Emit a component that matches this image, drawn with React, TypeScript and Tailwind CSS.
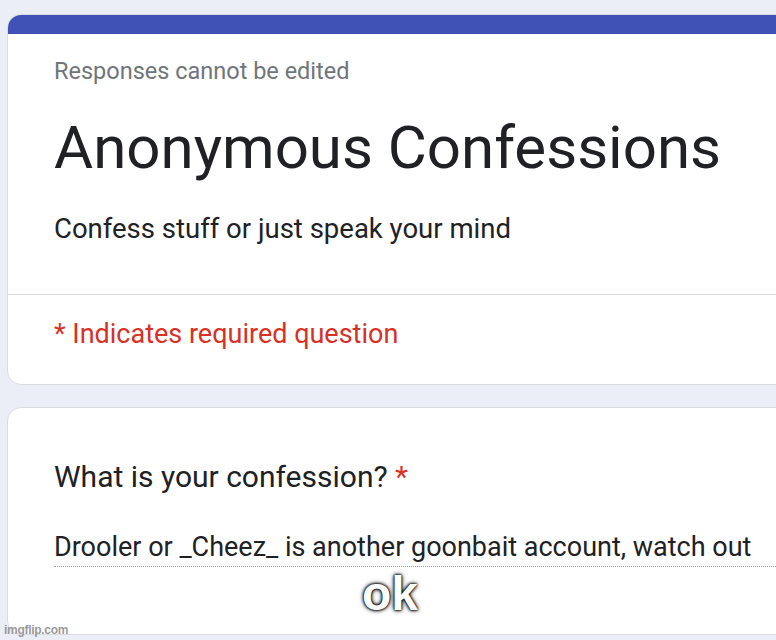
import React from 'react';

export default function App() {
  return (
    <div className="relative w-[776px] h-[640px] overflow-hidden bg-[#ebedf7] font-['Roboto',sans-serif] text-[#202124]">
      <div className="pt-[14px] pl-[7px]">
        {/* header card */}
        <div className="w-[840px] rounded-[14px] overflow-hidden bg-white border border-[#dadce0]">
          <div className="h-[19px] bg-[#3f51b5]" />
          <div className="pl-[46px] pt-[23px] pb-[49px]">
            <p className="text-[23.5px] leading-[28px] text-[#70757a]">Responses cannot be edited</p>
            <h1 className="mt-[28px] text-[60px] leading-[70px]">Anonymous Confessions</h1>
            <p className="mt-[30px] text-[27.5px] leading-[32px]">Confess stuff or just speak your mind</p>
          </div>
          <div className="border-t border-[#dadce0] pl-[46px] pt-[23px] pb-[34px]">
            <p className="text-[27px] leading-[32px] text-[#d93025]">* Indicates required question</p>
          </div>
        </div>

        {/* question card */}
        <div className="mt-[22px] w-[840px] h-[228px] rounded-[14px] bg-white border border-[#dadce0] pl-[46px] pt-[51px]">
          <p className="text-[30px] leading-[36px]">
            What is your confession? <span className="text-[#d93025]">*</span>
          </p>
          <div className="mt-[36px] border-b border-dotted border-[#9e9e9e] pb-[3px]">
            <p className="text-[27px] leading-[32px]">Drooler or _Cheez_ is another goonbait account, watch out</p>
          </div>
        </div>
      </div>

      <span className="absolute left-[362px] top-[566px] font-['Liberation_Sans',Arial,sans-serif] font-bold text-[48px] leading-[56px] text-white [text-shadow:0_0_2px_#000,0_0_3px_#000,0_0_5px_#000]">
        ok
      </span>
      <span className="absolute left-[4px] top-[623px] font-['Liberation_Sans',Arial,sans-serif] font-bold text-[12px] leading-[14px] text-[#9a9a9a] tracking-[-0.3px]">
        imgflip.com
      </span>
    </div>
  );
}
